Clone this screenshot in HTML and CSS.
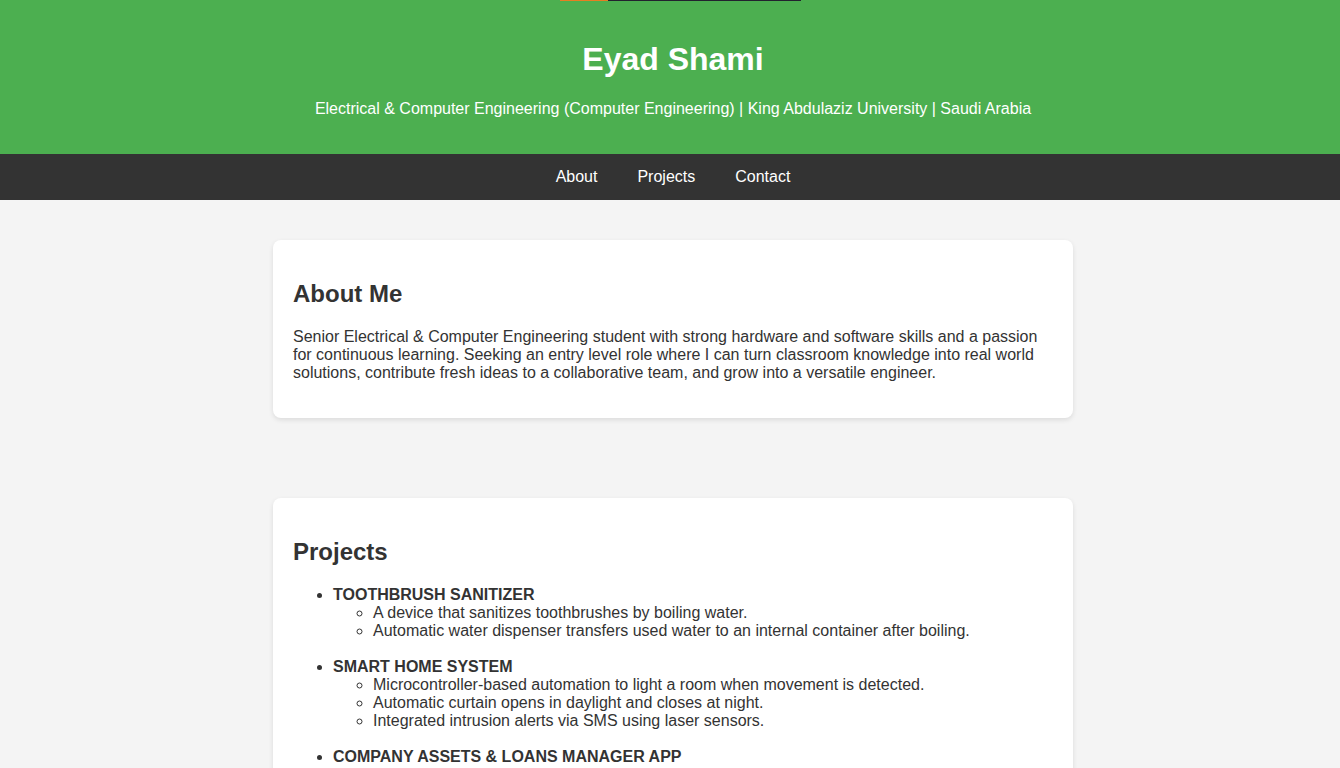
FILE: index.html
```html
<!DOCTYPE html>
<html lang="en">
<head>
<meta charset="utf-8">
<title>Eyad Shami</title>
<link rel="stylesheet" href="styles.css">
</head>
<body>
<div class="topline"><span class="topline-accent"></span><span class="topline-rest"></span></div>
<header class="site-header">
  <h1>Eyad Shami</h1>
  <p>Electrical &amp; Computer Engineering (Computer Engineering) | King Abdulaziz University | Saudi Arabia</p>
</header>
<nav class="site-nav">
  <a href="#about">About</a>
  <a href="#projects">Projects</a>
  <a href="#contact">Contact</a>
</nav>
<main class="content">
  <section class="card" id="about">
    <h2>About Me</h2>
    <p>Senior Electrical &amp; Computer Engineering student with strong hardware and software skills and a passion for continuous learning. Seeking an entry level role where I can turn classroom knowledge into real world solutions, contribute fresh ideas to a collaborative team, and grow into a versatile engineer.</p>
  </section>
  <section class="card" id="projects">
    <h2>Projects</h2>
    <ul class="projects">
      <li><strong>TOOTHBRUSH SANITIZER</strong>
        <ul>
          <li>A device that sanitizes toothbrushes by boiling water.</li>
          <li>Automatic water dispenser transfers used water to an internal container after boiling.</li>
        </ul>
      </li>
      <li><strong>SMART HOME SYSTEM</strong>
        <ul>
          <li>Microcontroller-based automation to light a room when movement is detected.</li>
          <li>Automatic curtain opens in daylight and closes at night.</li>
          <li>Integrated intrusion alerts via SMS using laser sensors.</li>
        </ul>
      </li>
      <li><strong>COMPANY ASSETS &amp; LOANS MANAGER APP</strong>
        <ul>
          <li>An application to track company assets and employee loans.</li>
        </ul>
      </li>
    </ul>
  </section>
</main>
</body>
</html>
```
FILE: styles.css
```css
html, body {
  margin: 0;
  padding: 0;
}
body {
  font-family: "Liberation Sans", Arial, sans-serif;
  background: #f4f4f4;
  color: #333;
  font-size: 16px;
  position: relative;
  width: 1346px;
}
.topline {
  position: absolute;
  top: 0;
  left: 560px;
  width: 241px;
  height: 1px;
  display: flex;
}
.topline-accent {
  width: 48px;
  background: #e67e22;
}
.topline-rest {
  flex: 1;
  background: #22222e;
}
.site-header {
  background: #4caf50;
  color: #fff;
  text-align: center;
  padding: 20px 0;
}
.site-header h1 {
  font-size: 32px;
  margin: 21.44px 0;
}
.site-header p {
  margin: 16px 0;
}
.site-nav {
  background: #333;
  display: flex;
  justify-content: center;
  padding: 14px 0;
}
.site-nav a {
  color: #fff;
  text-decoration: none;
  margin: 0 20px;
}
.content {
  display: flex;
  flex-direction: column;
  align-items: center;
  gap: 80px;
  padding: 40px 0;
}
.card {
  width: 760px;
  background: #fff;
  padding: 20px;
  border-radius: 8px;
  box-shadow: 0 2px 5px rgba(0, 0, 0, 0.1);
}
.card h2 {
  font-size: 24px;
  margin: 19.92px 0;
}
.card p {
  margin: 16px 0;
}
.projects {
  padding-left: 40px;
  margin: 16px 0;
}
.projects > li {
  margin-bottom: 18px;
}
.projects ul {
  padding-left: 40px;
  margin: 0;
}
```
